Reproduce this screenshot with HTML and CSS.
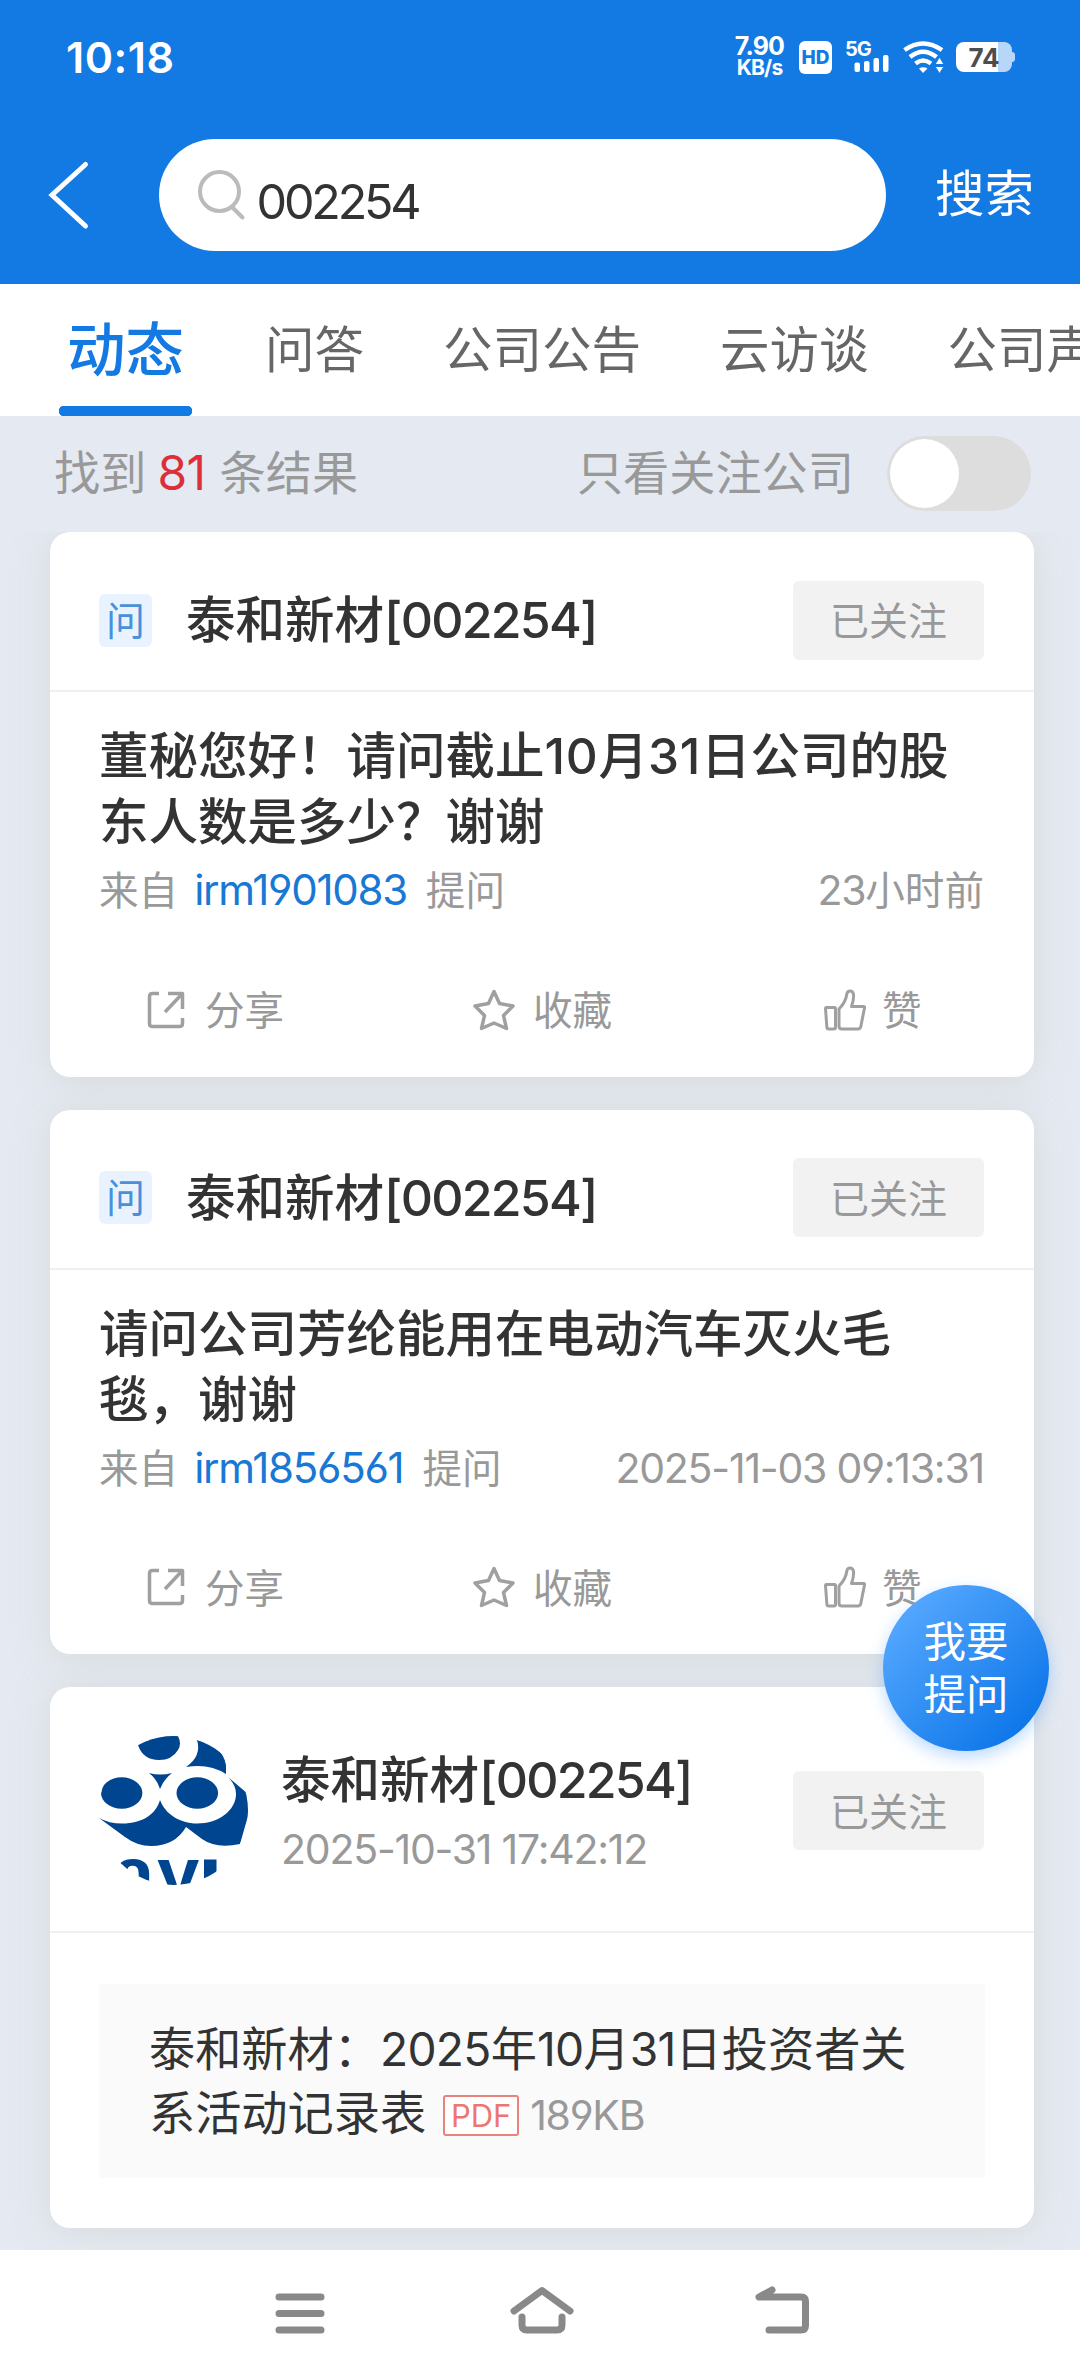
FILE: index.html
```html
<!DOCTYPE html>
<html lang="zh-CN">
<head>
  <meta charset="UTF-8" />
  <meta name="viewport" content="width=device-width, initial-scale=1.0"/>
  <title>搜索 002254</title>
  <link rel="stylesheet" href="styles.css">
</head>
<body>
  <!-- Shared icons -->
  <svg class="sprite" width="0" height="0">
    <symbol id="icon-share" viewBox="0 0 42 42">
      <path d="M14 4.500H7.500Q4.500 4.500 4.500 7.500V34.500Q4.500 37.500 7.500 37.500H34.500Q37.500 37.500 37.500 34.500V29M23 4.500H37.500V20M37 5L20 23" />
    </symbol>
    <symbol id="icon-star" viewBox="0 0 42 42">
      <path d="M21 2.500L26.500 14.500L40 17L30.500 26.500L33.500 39.500L21 34L8.500 39.500L11.500 26.500L2 17L15.500 14.500Z" />
    </symbol>
    <symbol id="icon-like" viewBox="0 0 42 42">
      <path d="M2 18.500H10.500Q11.500 18.500 11.500 19.500V38.500Q11.500 40 10 40H4.500Q3 40 2.900 38.500L1.500 19.500ZM15 20V37Q15 40 18 40H34Q36 40 36.700 38L40.500 19Q41 17.500 39.500 17.500H27.500Q30 11 29.500 5.500Q29 2 26 2Q23.500 2 22.800 5Q22 13 15 20Z" />
    </symbol>
  </svg>

  <header class="top">
    <div class="status">
      <span class="clock">10:18</span>
      <div class="status-icons">
        <div class="speed"><span>7.90</span><span class="unit">KB/s</span></div>
        <span class="hd">HD</span>
        <svg class="signal" width="46" height="34" viewBox="0 0 46 34">
          <text x="0" y="16">5G</text>
          <rect x="9.500" y="22.500" width="5.500" height="9.500" rx="2" />
          <rect x="19" y="21" width="5.500" height="11" rx="2" />
          <rect x="28.500" y="18" width="5.500" height="14" rx="2" />
          <rect x="38" y="15" width="5.500" height="17" rx="2" />
        </svg>
        <svg class="wifi" width="42" height="34" viewBox="0 0 42 34">
          <g fill="none" stroke="#fff" stroke-width="4.500">
            <path d="M1.500 10Q20 -3 39 10" />
            <path d="M7 17Q20 6.500 33.500 17" />
            <path d="M12.500 23.500Q20 17.500 28 23.500" />
          </g>
          <path d="M16 28.500Q20 26 24.500 28.500L20 33Z" fill="#fff" />
          <path d="M36.500 17L41 24.500H32ZM36.500 33.500L41 26.500H32Z" fill="#fff" stroke="#137ae3" stroke-width="1" />
        </svg>
        <div class="battery"><span>74</span></div>
      </div>
    </div>
    <div class="search-bar">
      <svg class="back" width="44" height="72" viewBox="0 0 44 72">
        <path d="M38.500 5.500L5 36L38.500 67" />
      </svg>
      <div class="search-box">
        <svg width="50" height="52" viewBox="0 0 50 52">
          <circle cx="22.500" cy="22.500" r="19.500" /><path d="M35 38L45.500 48.500" />
        </svg>
        <span>002254</span>
      </div>
      <span class="search-btn">搜索</span>
    </div>
  </header>

  <nav class="tabs">
    <span class="tab active">动态</span>
    <span class="tab">问答</span>
    <span class="tab">公司公告</span>
    <span class="tab">云访谈</span>
    <span class="tab">公司声明</span>
  </nav>

  <div class="filter">
    <p>找到<b>81</b>条结果</p>
    <div class="only-followed"><p>只看关注公司</p><span class="switch"></span></div>
  </div>

  <main class="list">
    <section class="card">
      <div class="card-head">
        <span class="badge">问</span>
        <h2>泰和新材<span class="num">[002254]</span></h2>
        <button>已关注</button>
      </div>
      <p class="question">董秘您好！请问截止<span class="num">10</span>月<span class="num">31</span>日公司的股东人数是多少？谢谢</p>
      <div class="meta">
        <span>来自<a class="num">irm1901083</a>提问</span>
        <time><span class="num">23</span>小时前</time>
      </div>
      <div class="actions">
        <span><svg><use href="#icon-share"/></svg><em>分享</em></span>
        <span><svg><use href="#icon-star"/></svg><em>收藏</em></span>
        <span><svg class="like"><use href="#icon-like"/></svg><em>赞</em></span>
      </div>
    </section>

    <section class="card">
      <div class="card-head">
        <span class="badge">问</span>
        <h2>泰和新材<span class="num">[002254]</span></h2>
        <button>已关注</button>
      </div>
      <p class="question">请问公司芳纶能用在电动汽车灭火毛毯，谢谢</p>
      <div class="meta">
        <span>来自<a class="num">irm1856561</a>提问</span>
        <time><span class="num">2025-11-03 09:13:31</span></time>
      </div>
      <div class="actions">
        <span><svg><use href="#icon-share"/></svg><em>分享</em></span>
        <span><svg><use href="#icon-star"/></svg><em>收藏</em></span>
        <span><svg class="like"><use href="#icon-like"/></svg><em>赞</em></span>
      </div>
    </section>

    <section class="card">
      <div class="card-head company">
        <svg class="avatar" width="149" height="149" viewBox="0 0 149 149">
          <clipPath id="round"><circle cx="74.500" cy="74.500" r="74.500" /></clipPath>
          <g clip-path="url(#round)" fill="#00458f">
            <path d="M39 9Q56 -2 79 0Q83 8 79 14Q73 24 60 24Q44 24 39 9Z" />
            <path d="M98 4Q124 10 127 29V38Q110 27 87 31Q103 20 98 4Z" />
            <path d="M50 37Q61 40 73 37Q65 43 61 53Q58 43 50 37Z" />
            <ellipse cx="22.700" cy="57" rx="20.700" ry="15.700" />
            <ellipse cx="98.300" cy="57" rx="20.800" ry="15.700" />
            <path d="M0 82Q10 87.500 23 87.500C44 87.500 57 78 61 64C66 78 81 87.500 98 87.500C120 87.500 137 74 137 58Q137 49 129 41L149 58V80L141 108Q117 113 103 103L87 91Q76 110 52 110Q38 110 26 101Z" />
            <text x="13 58" y="164">ay</text>
            <rect x="105" y="123.500" width="12.500" height="26" />
          </g>
        </svg>
        <div class="company-name">
          <h2>泰和新材<span class="num">[002254]</span></h2>
          <time class="num">2025-10-31 17:42:12</time>
        </div>
        <button>已关注</button>
      </div>
      <p class="doc">泰和新材：<span class="num">2025</span>年<span class="num">10</span>月<span class="num">31</span>日投资者关系活动记录表<span class="pdf">PDF</span><small class="num">189KB</small></p>
    </section>
  </main>

  <div class="ask">我要<br>提问</div>

  <footer class="navbar">
    <svg width="56" height="52" viewBox="0 0 56 52"><path d="M7 11H49M7 27.500H49M7 44H49" /></svg>
    <svg width="64" height="52" viewBox="0 0 64 52"><path d="M4 25L32 4.500L60 25M12 31V39Q12 44 17 44H47Q52 44 52 39V31" /></svg>
    <svg width="56" height="52" viewBox="0 0 56 52"><path d="M17 4L4 11H46Q50.500 11 50.500 15.500V39.500Q50.500 44 46 44H14" /></svg>
  </footer>
</body>
</html>
```
FILE: styles.css
```css
* {
  box-sizing: border-box;
}

body {
  margin: 0;
  width: 1080px;
  height: 2376px;
  overflow: hidden;
  display: flex;
  flex-direction: column;
  background: #e5eaf2;
  color: #333;
  font-family: "Noto Sans CJK SC", sans-serif;
  font-size: 39.6px;
}

h2, p {
  margin: 0;
}

em {
  font-style: normal;
}

.sprite {
  position: absolute;
}

.num {
  font-family: Inter, "Noto Sans CJK SC", sans-serif;
  font-feature-settings: "cv03", "cv04";
  letter-spacing: -0.035em;
  line-height: 1;
}

/* Header */
.top {
  height: 284px;
  flex: none;
  background: #137ae3;
  color: #fff;
}

.status {
  height: 114px;
  padding: 0 65px 0 66px;
  display: flex;
  justify-content: space-between;
  align-items: center;
  font-family: Inter, sans-serif;
}

.clock {
  font-size: 43px;
  font-weight: 600;
  letter-spacing: 0.5px;
}

.status-icons {
  display: flex;
  align-items: center;
}

.speed {
  width: 49px;
  margin-right: 15px;
  display: flex;
  flex-direction: column;
  align-items: center;
  font-size: 25px;
  font-weight: 700;
  line-height: 21px;
  letter-spacing: -0.8px;
}

.unit {
  font-size: 21px;
}

.hd {
  width: 33px;
  height: 33px;
  margin-right: 13px;
  border-radius: 6px;
  background: #fff;
  color: #137ae3;
  font-size: 19px;
  font-weight: 800;
  line-height: 33px;
  text-align: center;
}

.signal {
  margin-right: 12px;
  overflow: visible;
  fill: #fff;
  font-size: 20px;
  font-weight: 700;
  letter-spacing: -1px;
}

.wifi {
  margin-right: 11px;
}

.battery {
  position: relative;
  width: 56px;
  height: 30px;
  margin-right: 3px;
  border-radius: 8px;
  background: linear-gradient(90deg, #fff 42px, #b8d6f7 42px);
  color: #4d4d4d;
  font-size: 26px;
  font-weight: 700;
  line-height: 31px;
  text-align: center;
}

.battery::after {
  content: "";
  position: absolute;
  right: -3px;
  top: 10px;
  width: 3px;
  height: 10px;
  border-radius: 0 3px 3px 0;
  background: #b8d6f7;
}

.search-bar {
  height: 162px;
  padding: 0 46px 0 47px;
  display: flex;
  align-items: center;
  justify-content: space-between;
}

.back {
  fill: none;
  stroke: #fff;
  stroke-width: 5;
  stroke-linecap: round;
}

.search-box {
  width: 727px;
  height: 112px;
  margin-left: 18px;
  padding-left: 38px;
  border-radius: 56px;
  background: #fff;
  color: #333;
  display: flex;
  align-items: center;
  font-family: Inter, sans-serif;
  font-feature-settings: "cv03", "cv04";
  font-size: 48.5px;
  letter-spacing: -3.2px;
}

.search-box svg {
  fill: none;
  stroke: #bbb;
  stroke-width: 4;
  stroke-linecap: round;
}

.search-box span {
  padding: 12px 0 0 10px;
}

.search-btn {
  padding-bottom: 9px;
  font-size: 49.5px;
}

/* Tabs */
.tabs {
  height: 132px;
  flex: none;
  padding-left: 59px;
  display: flex;
  gap: 79px;
  overflow: hidden;
  background: #fff;
  color: #666;
  font-size: 49.5px;
  line-height: 126px;
  white-space: nowrap;
}

.active {
  width: 133px;
  margin-right: -6px;
  flex: none;
  background: linear-gradient(#137ae3, #137ae3) center bottom / 123px 10px no-repeat, radial-gradient(circle at 5px 127px, #137ae3 5px, transparent 5.5px), radial-gradient(circle at 128px 127px, #137ae3 5px, transparent 5.5px);
  color: #137ae3;
  font-size: 58.5px;
  font-weight: 500;
  line-height: 124px;
  text-align: center;
}

.filter {
  height: 116px;
  flex: none;
  padding: 0 49px 1px 54px;
  display: flex;
  justify-content: space-between;
  align-items: center;
  color: #999;
  font-size: 46.2px;
}

.filter p {
  padding-bottom: 8px;
}

.filter b {
  margin: 0 14px 0 11px;
  color: #dc2f3a;
  font-family: Inter, sans-serif;
  font-size: 48px;
  font-weight: 400;
  line-height: 1;
  letter-spacing: -0.5px;
}

.only-followed {
  display: flex;
  align-items: center;
  gap: 33px;
}

.switch {
  width: 144px;
  height: 75px;
  padding: 3px;
  border-radius: 38px;
  background: #ddd;
}

.switch::before {
  content: "";
  display: block;
  width: 69px;
  height: 69px;
  border-radius: 50%;
  background: #fff;
}

/* Result cards */
.list {
  height: 1718px;
  flex: none;
  padding: 0 46px 0 50px;
  display: flex;
  flex-direction: column;
  gap: 33px;
  overflow: hidden;
}

.card {
  height: 544.5px;
  flex: none;
  border-radius: 20px;
  background: #fff;
  box-shadow: 0 3px 36px rgba(208, 211, 210, 0.7);
}

.card:last-child {
  height: 541px;
}

.card-head {
  height: 160px;
  padding: 49px 50px 31px 49px;
  border-bottom: 2px solid #f0f0f0;
  display: flex;
  align-items: center;
}

.card-head h2 {
  flex: 1;
  padding-bottom: 6px;
  font-size: 49.5px;
  font-weight: 500;
  line-height: 70px;
}

h2 .num {
  font-size: 50px;
}

.badge {
  width: 53px;
  height: 53px;
  margin-right: 34px;
  border-radius: 6px;
  background: #e8f3ff;
  color: #4a90d9;
  font-size: 39px;
  line-height: 49px;
  text-align: center;
}

button {
  width: 191px;
  height: 79px;
  padding: 0 0 4px;
  border: none;
  border-radius: 6px;
  background: #f2f2f2;
  color: #999;
  font: inherit;
  font-size: 39px;
}

.question {
  padding: 28px 49px 0;
  font-size: 49.5px;
  font-weight: 500;
  line-height: 66px;
}

.question .num {
  letter-spacing: 0.015em;
}

.meta {
  height: 60px;
  margin-top: 6px;
  padding: 0 50px 0 49px;
  display: flex;
  justify-content: space-between;
  color: #999;
  line-height: 60px;
  white-space: nowrap;
}

.meta .num, .company-name time {
  font-size: 41px;
  letter-spacing: -0.03em;
}

.meta a.num {
  margin: 0 19px 0 16px;
  color: #1978d4;
  font-size: 42px;
  letter-spacing: -0.03em;
}

.actions {
  height: 60px;
  margin-top: 60px;
  padding-left: 95px;
  display: grid;
  grid-template-columns: 328px 351px auto;
  color: #999;
  line-height: 60px;
}

.actions span {
  display: flex;
  align-items: center;
}

.actions em {
  padding-bottom: 5px;
}

.actions svg {
  width: 42px;
  height: 42px;
  margin: 0 18px 2px 0;
  fill: none;
  stroke: #a0a0a0;
  stroke-width: 3.5;
  stroke-linejoin: round;
}

.actions .like {
  margin-right: 16px;
  stroke-width: 3;
}

/* Company announcement */
.company {
  height: 246px;
  padding-bottom: 46px;
}

.avatar {
  margin-right: 33px;
}

.avatar text {
  font: bold 76px "Liberation Sans", sans-serif;
}

.company-name {
  flex: 1;
}

.company-name time {
  display: block;
  color: #999;
  line-height: 62px;
}

.doc {
  height: 194px;
  margin: 51px 49px 0 49px;
  padding: 30px 50px;
  background: #fafafa;
  font-size: 46.2px;
  line-height: 64px;
}

.doc .num {
  letter-spacing: -0.015em;
}

.doc .pdf {
  display: inline-block;
  width: 76px;
  height: 41px;
  margin: 0 11px 0 17px;
  border: 2px solid #e8837e;
  border-radius: 3px;
  background: #fff;
  color: #ee7670;
  font-family: Inter, sans-serif;
  font-size: 31px;
  line-height: 38px;
  text-align: center;
  vertical-align: 3px;
}

.doc small.num {
  color: #999;
  font-size: 41px;
  letter-spacing: -0.03em;
}

/* Floating ask button */
.ask {
  position: absolute;
  left: 883px;
  top: 1585px;
  width: 166px;
  height: 166px;
  padding-top: 27px;
  border-radius: 50%;
  background: linear-gradient(135deg, #57a9ff 10%, #0a74e8 90%);
  box-shadow: 0 6px 16px rgba(60, 150, 255, 0.35);
  color: #fff;
  font-size: 42.5px;
  line-height: 53px;
  text-align: center;
}

.navbar {
  height: 126px;
  flex: none;
  padding: 36px 269px 0 272px;
  display: flex;
  justify-content: space-between;
  background: #fff;
}

.navbar svg {
  fill: none;
  stroke: #898989;
  stroke-width: 7;
  stroke-linecap: round;
  stroke-linejoin: round;
}
```
